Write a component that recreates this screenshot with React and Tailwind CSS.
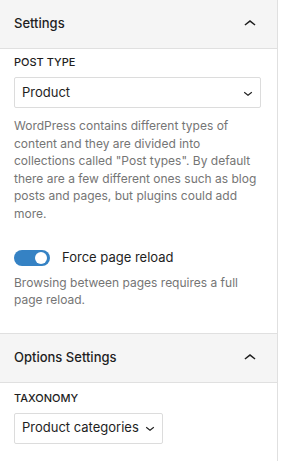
import React, { useState } from "react";

function ChevronUp() {
  return (
    <svg width="24" height="24" viewBox="0 0 24 24" className="fill-[#1e1e1e]">
      <path d="M6.5 12.4L12 8l5.5 4.4-.9 1.2L12 10l-4.6 3.6-1-1.2z" />
    </svg>
  );
}

function ChevronDown() {
  return (
    <svg width="18" height="18" viewBox="0 0 24 24" className="fill-[#1e1e1e] shrink-0">
      <path d="M17.5 11.6L12 16l-5.5-4.4.9-1.2L12 14l4.6-3.6 1 1.2z" />
    </svg>
  );
}

function PanelHeader({ title }) {
  return (
    <div className="h-[49px] bg-[#f5f5f5] border-b border-[#e0e0e0] flex items-center justify-between pl-[14px] pr-[15px]">
      <span className="text-[13px] font-medium text-[#1e1e1e]">{title}</span>
      <ChevronUp />
    </div>
  );
}

function Label({ children }) {
  return (
    <div className="text-[11px] leading-[16px] font-medium uppercase text-[#1e1e1e] mb-[7px]">
      {children}
    </div>
  );
}

function Select({ value, className }) {
  return (
    <div
      className={`h-[31px] border border-[#dcdcdc] rounded-[2px] flex items-center justify-between pl-[7px] pr-[3px] text-[13px] text-[#1e1e1e] ${className}`}
    >
      <span>{value}</span>
      <ChevronDown />
    </div>
  );
}

export default function App() {
  const [reload, setReload] = useState(true);

  return (
    <div className="w-[282px] h-[461px] bg-white overflow-hidden font-['Inter',sans-serif]">
      <div className="w-[278px] h-full border-r border-[#e0e0e0]">
        <div className="border-b border-[#e0e0e0]">
          <PanelHeader title="Settings" />
          <div className="pl-[14px] pr-[16px] pt-[5px] pb-[24px]">
            <Label>Post type</Label>
            <Select value="Product" className="w-full" />
            <p className="mt-[9px] text-[12px] leading-[17.5px] text-[#757575]">
              WordPress contains different types of content and they are divided into
              collections called "Post types". By default there are a few different ones
              such as blog posts and pages, but plugins could add more.
            </p>

            <div className="mt-[26px] flex items-center gap-[12px]">
              <button
                onClick={() => setReload((v) => !v)}
                className={`relative w-[36px] h-[16px] rounded-full ${reload ? "bg-[#3582c4]" : "bg-[#949494]"}`}
                aria-label="Force page reload"
              >
                <span
                  className={`absolute top-[2px] w-[12px] h-[12px] rounded-full bg-white ${reload ? "right-[3px]" : "left-[3px]"}`}
                />
              </button>
              <span className="text-[13px] text-[#1e1e1e]">Force page reload</span>
            </div>
            <p className="mt-[6px] text-[12px] leading-[17.5px] text-[#757575]">
              Browsing between pages requires a full page reload.
            </p>
          </div>
        </div>

        <PanelHeader title="Options Settings" />
        <div className="pl-[14px] pr-[16px] pt-[7px]">
          <Label>Taxonomy</Label>
          <Select value="Product categories" className="w-[149px]" />
        </div>
      </div>
    </div>
  );
}
